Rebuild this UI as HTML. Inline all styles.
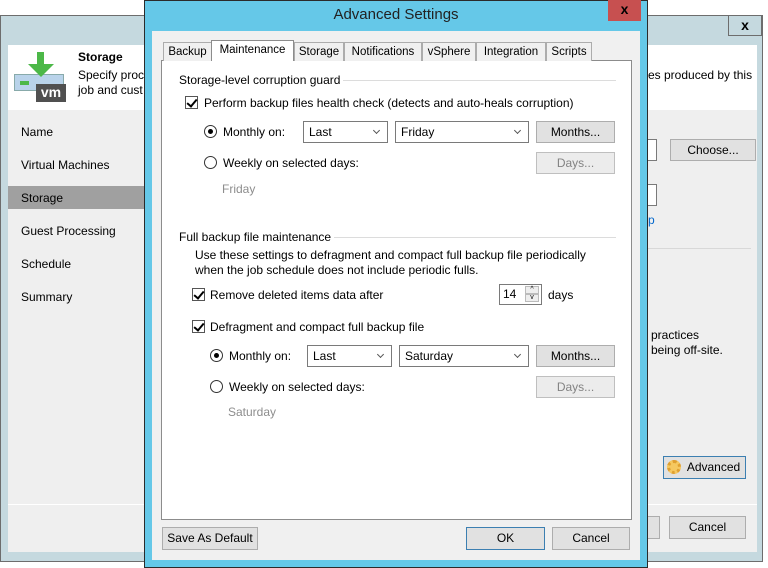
<!DOCTYPE html>
<html><head><meta charset="utf-8"><style>
*{box-sizing:border-box;margin:0;padding:0}
body{width:768px;height:568px;background:#fff;position:relative;overflow:hidden;font-family:"Liberation Sans",sans-serif;font-size:12px;color:#000}
.a{position:absolute;white-space:nowrap}
.btn{position:absolute;background:#e1e1e1;border:1px solid #adadad;text-align:center;line-height:20px;font-size:12px}
.dis{color:#838383;border-color:#bfbfbf;background:#ececec}
.cb{position:absolute;width:13px;height:13px;border:1px solid #555;background:#fff}
.cb:after{content:"";position:absolute;left:3px;top:0px;width:4px;height:8px;border:solid #000;border-width:0 2px 2px 0;transform:rotate(40deg)}
.rd{position:absolute;width:13px;height:13px;border:1px solid #333;border-radius:50%;background:#fff}
.rd.on:after{content:"";position:absolute;left:3px;top:3px;width:5px;height:5px;border-radius:50%;background:#000}
.cmb{position:absolute;height:22px;border:1px solid #7a7a7a;background:#fff;padding-left:5px;line-height:20px}
.cmb:after{content:"";position:absolute;right:8px;top:6px;width:4px;height:4px;border:solid #555;border-width:0 1.5px 1.5px 0;transform:rotate(45deg)}
.tab{position:absolute;top:42px;height:19px;border:1px solid #acacac;border-bottom:none;background:#f0f0f0;text-align:center;line-height:18px;font-size:11.5px}
.nav{position:absolute;left:21px}
.gray{color:#8d8d8d}
</style></head><body>
<div class="a" style="left:0;top:15px;width:763px;height:547px;background:#c5d9df;border:1px solid #6d6d6d"></div>
<div class="a" style="left:728px;top:15px;width:34px;height:21px;border:1px solid #6d6d6d;text-align:center;font-weight:bold;font-size:14px;line-height:18px">x</div>
<div class="a" style="left:8px;top:45px;width:749px;height:65px;background:#fff"></div>
<div class="a" style="left:8px;top:110px;width:749px;height:442px;background:#efefef"></div>
<div class="a" style="left:8px;top:504px;width:749px;height:1px;background:#fff"></div>
<div class="a" style="left:8px;top:186px;width:136px;height:23px;background:#a0a0a0"></div>
<div class="nav a" style="top:125px">Name</div>
<div class="nav a" style="top:158px">Virtual Machines</div>
<div class="nav a" style="top:191px">Storage</div>
<div class="nav a" style="top:224px">Guest Processing</div>
<div class="nav a" style="top:257px">Schedule</div>
<div class="nav a" style="top:290px">Summary</div>
<div class="a" style="left:14px;top:74px;width:50px;height:17px;background:#b9d3ea;border:1px solid #8aa"></div>
<div class="a" style="left:20px;top:81px;width:9px;height:4px;background:#4cb848"></div>
<div class="a" style="left:36px;top:84px;width:30px;height:18px;background:#505050;color:#fff;font-weight:bold;font-size:14px;line-height:16px;text-align:center">vm</div>
<div class="a" style="left:37px;top:52px;width:7px;height:14px;background:#4cb848"></div>
<div class="a" style="left:28px;top:64px;width:0;height:0;border-left:13px solid transparent;border-right:13px solid transparent;border-top:13px solid #4cb848"></div>
<div class="a" style="left:78px;top:50px;font-weight:bold">Storage</div>
<div class="a" style="left:78px;top:68px">Specify proc</div>
<div class="a" style="left:78px;top:83px">job and cust</div>
<div class="a" style="left:648px;top:68px">es produced by this</div>
<div class="a" style="left:640px;top:139px;width:17px;height:22px;border:1px solid #7a7a7a;background:#fff"></div>
<div class="btn" style="left:670px;top:139px;width:86px;height:22px">Choose...</div>
<div class="a" style="left:640px;top:184px;width:17px;height:22px;border:1px solid #7a7a7a;background:#fff"></div>
<div class="a" style="left:648px;top:213px;color:#0066cc">p</div>
<div class="a" style="left:648px;top:248px;width:103px;height:1px;background:#d8d8d8"></div>
<div class="a" style="left:651px;top:328px">practices</div>
<div class="a" style="left:651px;top:343px">being off-site.</div>
<div class="btn" style="left:663px;top:456px;width:83px;height:23px;border-color:#3c7fb1;padding-left:18px">Advanced</div>
<div class="a" style="left:667px;top:460px;width:14px;height:14px;border-radius:50%;border:3px dotted #e0a030;background:#f5c860"></div>
<div class="btn" style="left:645px;top:516px;width:15px;height:23px"></div>
<div class="btn" style="left:669px;top:516px;width:77px;height:23px">Cancel</div>
<div class="a" style="left:144px;top:0;width:504px;height:568px;background:#65c8e8;border:1px solid #2b2b2b"></div>
<div class="a" style="left:145px;top:6px;width:502px;text-align:center;font-size:15px;color:#222">Advanced Settings</div>
<div class="a" style="left:608px;top:0;width:33px;height:21px;background:#c75050;text-align:center;font-weight:bold;font-size:14px;line-height:18px">x</div>
<div class="a" style="left:152px;top:31px;width:488px;height:529px;background:#f0f0f0"></div>
<div class="a" style="left:161px;top:60px;width:471px;height:460px;background:#fff;border:1px solid #8c8c8c"></div>
<div class="tab" style="left:163px;width:49px">Backup</div>
<div class="tab" style="left:211px;top:40px;height:21px;width:83px;background:#fff;border-color:#8c8c8c">Maintenance</div>
<div class="tab" style="left:294px;width:50px">Storage</div>
<div class="tab" style="left:344px;width:78px">Notifications</div>
<div class="tab" style="left:422px;width:54px">vSphere</div>
<div class="tab" style="left:476px;width:70px">Integration</div>
<div class="tab" style="left:546px;width:46px">Scripts</div>
<div class="a" style="left:179px;top:73px">Storage-level corruption guard</div>
<div class="a" style="left:343px;top:80px;width:273px;height:1px;background:#dcdcdc"></div>
<div class="cb" style="left:185px;top:96px"></div>
<div class="a" style="left:204px;top:96px">Perform backup files health check (detects and auto-heals corruption)</div>
<div class="rd on" style="left:204px;top:125px"></div>
<div class="a" style="left:223px;top:125px">Monthly on:</div>
<div class="cmb" style="left:303px;top:121px;width:85px">Last</div>
<div class="cmb" style="left:395px;top:121px;width:134px">Friday</div>
<div class="btn" style="left:536px;top:121px;width:79px;height:22px">Months...</div>
<div class="rd" style="left:204px;top:156px"></div>
<div class="a" style="left:223px;top:156px">Weekly on selected days:</div>
<div class="btn dis" style="left:536px;top:152px;width:79px;height:22px">Days...</div>
<div class="a gray" style="left:222px;top:182px">Friday</div>
<div class="a" style="left:179px;top:230px">Full backup file maintenance</div>
<div class="a" style="left:334px;top:237px;width:282px;height:1px;background:#dcdcdc"></div>
<div class="a" style="left:195px;top:248px">Use these settings to defragment and compact full backup file periodically</div>
<div class="a" style="left:195px;top:263px">when the job schedule does not include periodic fulls.</div>
<div class="cb" style="left:192px;top:288px"></div>
<div class="a" style="left:210px;top:288px">Remove deleted items data after</div>
<div class="a" style="left:499px;top:284px;width:43px;height:21px;border:1px solid #7a7a7a;background:#fff;padding-left:3px;line-height:18px">14</div>
<div class="a" style="left:525px;top:286px;width:14px;height:8px;border:1px solid #bbb;background:#eee;font-size:7px;line-height:6px;text-align:center">^</div>
<div class="a" style="left:525px;top:294px;width:14px;height:8px;border:1px solid #bbb;background:#eee;font-size:7px;line-height:6px;text-align:center">v</div>
<div class="a" style="left:548px;top:288px">days</div>
<div class="cb" style="left:192px;top:320px"></div>
<div class="a" style="left:210px;top:320px">Defragment and compact full backup file</div>
<div class="rd on" style="left:210px;top:349px"></div>
<div class="a" style="left:229px;top:349px">Monthly on:</div>
<div class="cmb" style="left:307px;top:345px;width:85px">Last</div>
<div class="cmb" style="left:399px;top:345px;width:130px">Saturday</div>
<div class="btn" style="left:536px;top:345px;width:79px;height:22px">Months...</div>
<div class="rd" style="left:210px;top:380px"></div>
<div class="a" style="left:229px;top:380px">Weekly on selected days:</div>
<div class="btn dis" style="left:536px;top:376px;width:79px;height:22px">Days...</div>
<div class="a gray" style="left:228px;top:405px">Saturday</div>
<div class="btn" style="left:162px;top:527px;width:96px;height:23px">Save As Default</div>
<div class="btn" style="left:466px;top:527px;width:79px;height:23px;border-color:#3c7fb1">OK</div>
<div class="btn" style="left:552px;top:527px;width:78px;height:23px">Cancel</div>
</body></html>
